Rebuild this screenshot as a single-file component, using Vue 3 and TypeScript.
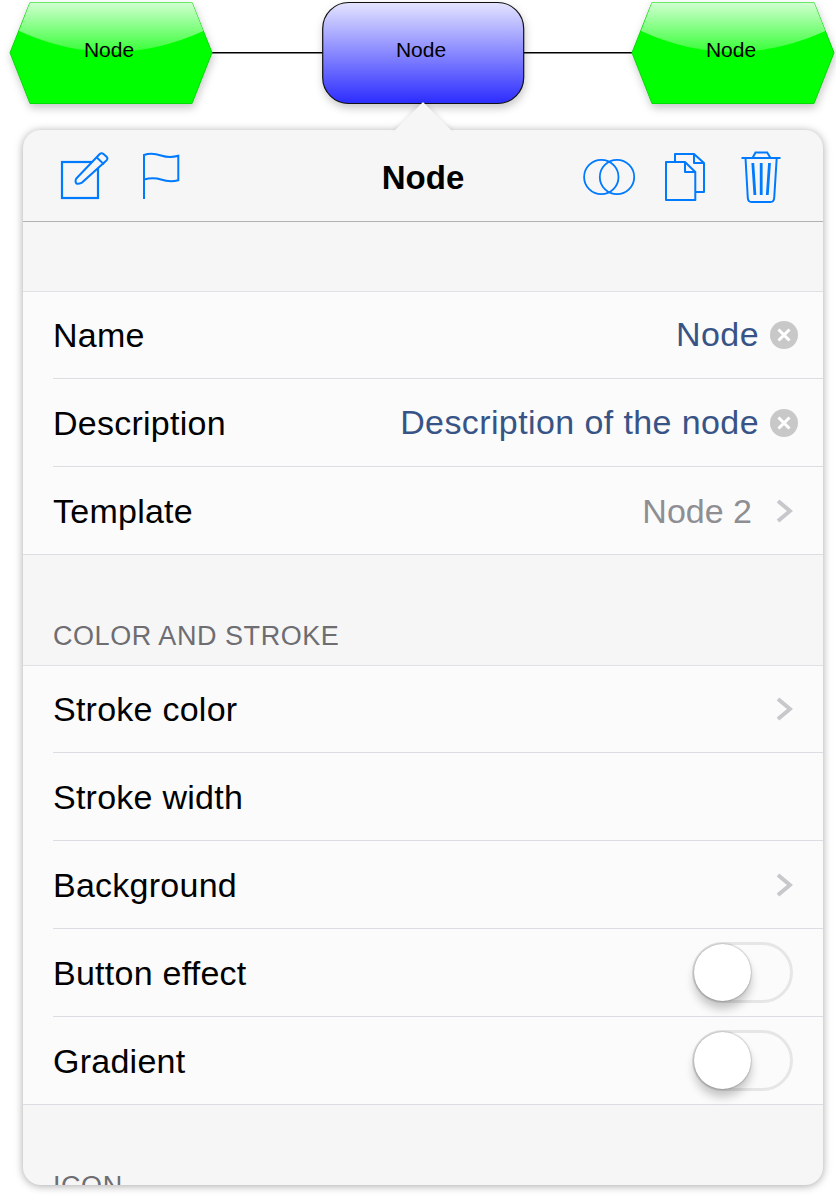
<template>
  <div class="page">
    <svg class="diagram" width="836" height="130" viewBox="0 0 836 130">
      <defs>
        <linearGradient id="gloss" x1="0" y1="0" x2="0" y2="1">
          <stop offset="0" stop-color="#fff" stop-opacity="0.82" />
          <stop offset="1" stop-color="#fff" stop-opacity="0.22" />
        </linearGradient>
        <linearGradient id="blueFill" x1="0" y1="0" x2="0" y2="1">
          <stop offset="0" stop-color="#e4e4ff" />
          <stop offset="1" stop-color="#2c2cff" />
        </linearGradient>
      </defs>
      <path class="edge" d="M212 52.7H323M524 52.7H632" />
      <g v-for="x in hexOffsets" :key="x" :transform="`translate(${x} 0)`">
        <polygon class="hex" points="10,52.7 30,2.5 192,2.5 212,52.7 192,103.5 30,103.5" />
        <path d="M30 2.5H192L203.4 31Q111 73 19 31Z" fill="url(#gloss)" />
        <text class="node-label" x="109" y="57">Node</text>
      </g>
      <rect class="rounded" x="322.7" y="2.5" width="201" height="101" rx="26" />
      <text class="node-label" x="421" y="57">Node</text>
    </svg>

    <div class="popover">
      <svg class="arrow" width="64" height="32" viewBox="0 0 64 32">
        <polygon points="2,32 32,2 62,32" />
      </svg>
      <div class="card">
        <header class="toolbar">
          <div class="tools tools-left">
            <svg class="icon" width="50" height="54" viewBox="60 151 50 54">
              <rect x="62" y="162" width="36" height="36" stroke-width="2.200" />
              <path stroke-width="2" d="M76.300 178.500L99.500 154.300C100.800 153 102.300 153 103.500 154L106.600 156.800C107.700 158 107.600 159.300 106.400 160.500L82 182.600C80 183.500 77.500 184 76.200 183.300C75.400 182 75.500 180 76.300 178.500Z" fill="#f6f6f6" />
              <path stroke-width="2" d="M96.600 157.300L104 164.400" />
            </svg>
            <svg class="icon" width="38" height="54" viewBox="142 151 38 54">
              <path stroke-width="2" d="M144 199V155C150 153 155 153.500 161 155.500S172.500 157.500 178.300 155.800V180.200C172.500 181.800 167 181.500 161 179.500S150 177.800 144 179.500" />
            </svg>
          </div>
          <h1 class="title">Node</h1>
          <div class="tools tools-right">
            <svg class="icon" width="54" height="54" viewBox="582 151 54 54">
              <circle cx="601.300" cy="177" r="17.200" stroke-width="1.800" />
              <circle cx="617" cy="177" r="17.200" stroke-width="1.800" />
            </svg>
            <svg class="icon icon-docs" width="42" height="54" viewBox="664 151 42 54">
              <path stroke-width="2" stroke-linejoin="round" d="M666 162H685L695.300 172V200H666Z" />
              <path stroke-width="2" stroke-linejoin="round" d="M685 162V172H695.300" />
              <path stroke-width="2" stroke-linejoin="round" d="M675 162V154H694L704 163V192H695.300M694 154V163H704" />
            </svg>
            <svg class="icon icon-trash" width="40" height="54" viewBox="740.500 151 40 54">
              <path stroke-width="2" d="M741 158H780M752 158L755 152.500H766.700L770 158" />
              <path stroke-width="2" d="M745 158L747.300 198C747.500 200.500 749 202 751 202H770C772 202 773.500 200.500 773.700 198L776.200 158" />
              <path stroke-width="2.800" d="M752.300 163L754.400 195M760.700 163V195M769 163L766.800 195" />
            </svg>
          </div>
        </header>

        <div class="spacer"></div>
        <section class="group">
          <div v-for="row in generalRows" :key="row.label" class="row">
            <span class="label">{{ row.label }}</span>
            <span v-if="row.value" :class="['value', row.kind === 'clear' ? 'value-edit' : 'value-muted']">{{ row.value }}</span>
            <svg v-if="row.kind === 'clear'" class="clear" width="28" height="28" viewBox="0 0 28 28">
              <circle cx="14" cy="14" r="14" fill="#c8c8c8" />
              <path d="M8.500 8.500L19.500 19.500M19.500 8.500L8.500 19.500" stroke="#fff" stroke-width="3" />
            </svg>
            <svg v-if="row.kind === 'link'" class="chevron" width="17" height="24" viewBox="0 0 17 24">
              <path d="M2 2L14 12L2 22" />
            </svg>
          </div>
        </section>

        <div class="section-title">COLOR AND STROKE</div>
        <section class="group">
          <div v-for="row in strokeRows" :key="row.label" class="row">
            <span class="label">{{ row.label }}</span>
            <svg v-if="row.kind === 'link'" class="chevron" width="17" height="24" viewBox="0 0 17 24">
              <path d="M2 2L14 12L2 22" />
            </svg>
            <span v-if="row.kind === 'toggle'" class="toggle"><span class="knob"></span></span>
          </div>
        </section>

        <div class="section-title">ICON</div>
      </div>
    </div>
  </div>
</template>

<script setup lang="ts">
interface Row {
  label: string;
  value?: string;
  kind?: 'clear' | 'link' | 'toggle';
}

const hexOffsets = [0, 622];

const generalRows: Row[] = [
  { label: 'Name', value: 'Node', kind: 'clear' },
  { label: 'Description', value: 'Description of the node', kind: 'clear' },
  { label: 'Template', value: 'Node 2', kind: 'link' }
];

const strokeRows: Row[] = [
  { label: 'Stroke color', kind: 'link' },
  { label: 'Stroke width' },
  { label: 'Background', kind: 'link' },
  { label: 'Button effect', kind: 'toggle' },
  { label: 'Gradient', kind: 'toggle' }
];
</script>

<style>
html,
body {
  background: #fff;
  overflow: hidden;
}
</style>

<style scoped>
.page {
  width: 836px;
  height: 1197px;
  font-family: 'Liberation Sans', Arial, sans-serif;
  color: #000;
}

.diagram {
  display: block;
  position: relative;
  z-index: 1;
}

.edge {
  fill: none;
  stroke: #000;
  stroke-width: 1.6;
}

.hex {
  fill: #00ff00;
  stroke: #00dd00;
  stroke-width: 1;
  filter: drop-shadow(1px 4px 4px rgba(0, 0, 0, 0.22));
}

.rounded {
  fill: url(#blueFill);
  stroke: #111;
  stroke-width: 1.2;
  filter: drop-shadow(1px 4px 4px rgba(0, 0, 0, 0.22));
}

.node-label {
  font-size: 21px;
  text-anchor: middle;
  fill: #000;
}

.popover {
  position: relative;
  width: 800px;
  margin-left: 23px;
}

.arrow {
  position: absolute;
  top: -30px;
  left: 368px;
  z-index: 2;
}

.arrow polygon {
  fill: #f6f6f6;
  filter: drop-shadow(0 -1px 2px rgba(0, 0, 0, 0.1));
}

.card {
  height: 1055px;
  overflow: hidden;
  border-radius: 18px;
  background: #f6f6f6;
  box-shadow: 0 1px 8px rgba(0, 0, 0, 0.35);
}

.toolbar {
  display: grid;
  grid-template-columns: 1fr auto 1fr;
  height: 92px;
  box-sizing: border-box;
  padding-top: 21px;
  border-bottom: 1px solid #b2b2b2;
}

.tools {
  display: flex;
  align-items: flex-start;
}

.tools-left {
  padding-left: 37px;
  gap: 32px;
}

.tools-right {
  justify-content: flex-end;
  padding-right: 42px;
  gap: 28px;
}

.icon {
  display: block;
  fill: none;
  stroke: #007aff;
  stroke-width: 1.8;
}

.icon-trash {
  margin-left: 7px;
}

.title {
  margin: 7px 0 0;
  font-size: 33px;
  line-height: 40px;
  font-weight: 700;
}

.spacer {
  height: 69px;
}

.group {
  background: #fbfbfb;
  box-shadow: inset 0 1px 0 #e0e0e6;
  border-bottom: 1px solid #dcdce2;
  padding-left: 30px;
}

.row {
  display: flex;
  align-items: center;
  height: 88px;
  box-sizing: border-box;
  border-bottom: 1px solid #dcdce2;
  padding-right: 30px;
  font-size: 34px;
}

.row:last-child {
  height: 87px;
  border-bottom: none;
}

.label {
  flex: 1;
  position: relative;
  top: 1px;
  letter-spacing: 0.25px;
}

.value {
  letter-spacing: 0.4px;
}

.value-edit {
  color: #385487;
}

.value-muted {
  position: relative;
  top: 1px;
  color: #8e8e93;
  letter-spacing: 0;
}

.clear {
  margin-left: 11px;
  margin-right: -5px;
}

.chevron {
  margin-left: 24px;
  fill: none;
}

.chevron path {
  stroke: #c7c7cc;
  stroke-width: 4;
}

.toggle {
  position: relative;
  width: 101px;
  height: 61px;
  margin-top: -1px;
  box-sizing: border-box;
  border: 3px solid #e6e6e6;
  border-radius: 31px;
}

.knob {
  position: absolute;
  left: -1px;
  top: -1px;
  width: 57px;
  height: 57px;
  border-radius: 50%;
  background: #fff;
  box-shadow: 0 0 2px rgba(0, 0, 0, 0.45), 0 8px 10px rgba(0, 0, 0, 0.22);
}

.section-title {
  height: 110px;
  box-sizing: border-box;
  padding: 66px 0 0 30px;
  font-size: 27px;
  line-height: 30px;
  letter-spacing: 0.55px;
  color: #6d6d72;
}
</style>
